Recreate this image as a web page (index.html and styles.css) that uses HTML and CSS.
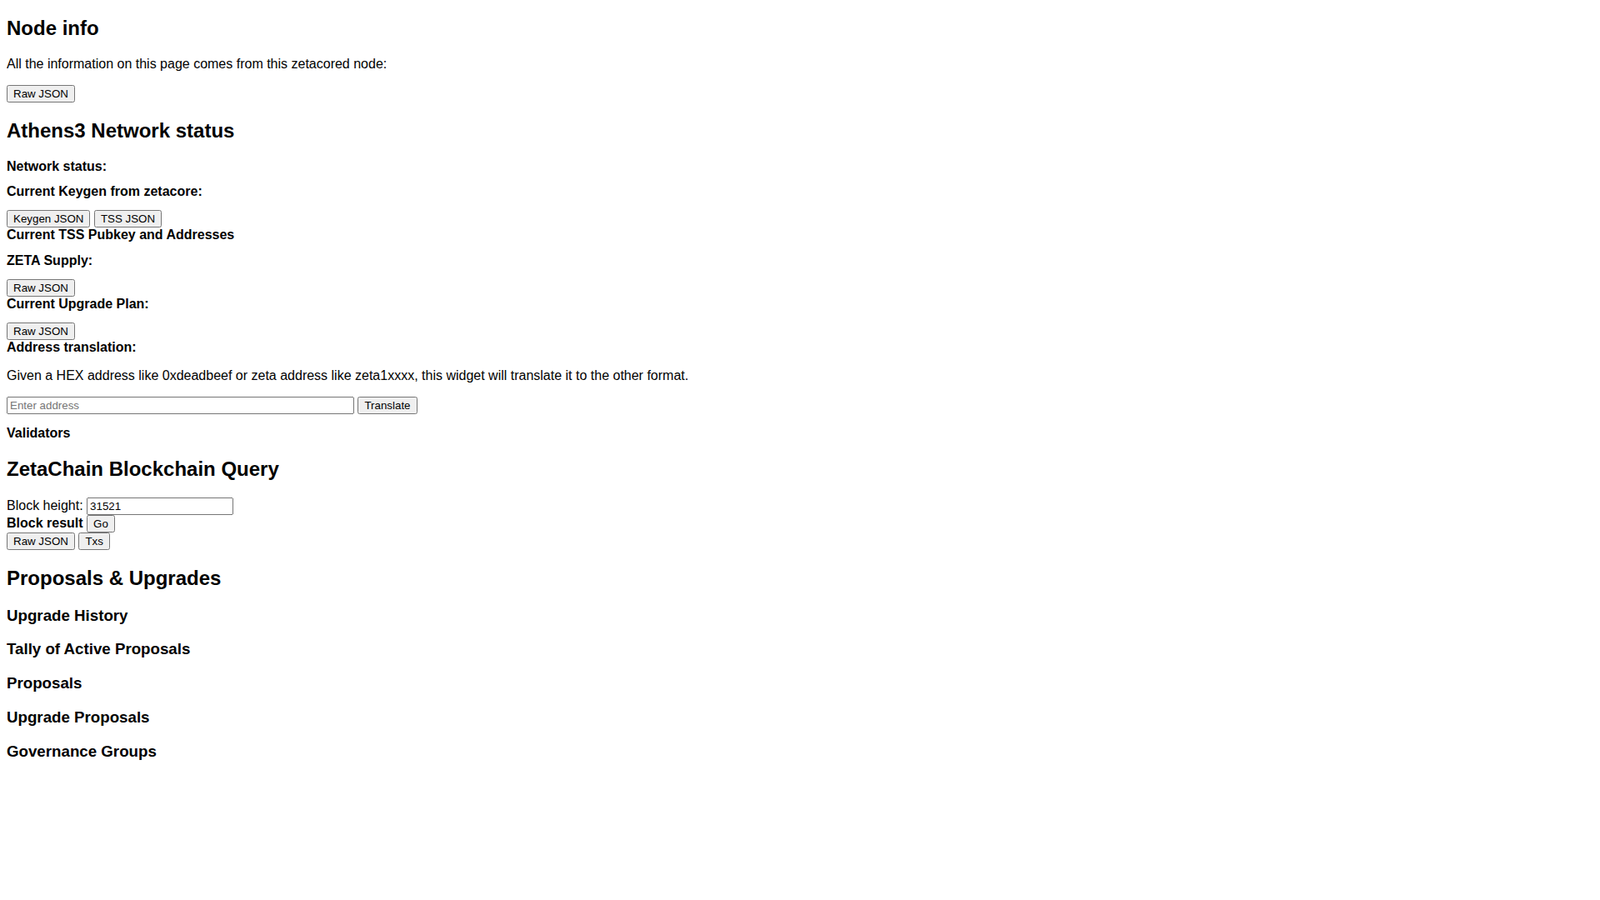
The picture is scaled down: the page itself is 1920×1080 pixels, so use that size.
FILE: index.html
```html
<!DOCTYPE html>
<html lang="en">
<head>
<meta charset="utf-8">
<title>Node info</title>
<link rel="stylesheet" href="styles.css">
</head>
<body class="page">
  <h2 class="section-title">Node info</h2>
  <p class="text">All the information on this page comes from this zetacored node:</p>
  <div class="btn-row"><button class="btn">Raw JSON</button></div>

  <h2 class="section-title">Athens3 Network status</h2>
  <h4 class="label">Network status:</h4>
  <h4 class="label">Current Keygen from zetacore:</h4>
  <div class="btn-row"><button class="btn">Keygen JSON</button> <button class="btn">TSS JSON</button></div>
  <h4 class="label">Current TSS Pubkey and Addresses</h4>
  <h4 class="label">ZETA Supply:</h4>
  <div class="btn-row"><button class="btn">Raw JSON</button></div>
  <h4 class="label">Current Upgrade Plan:</h4>
  <div class="btn-row"><button class="btn">Raw JSON</button></div>
  <h4 class="label">Address translation:</h4>
  <p class="text">Given a HEX address like 0xdeadbeef or zeta address like zeta1xxxx, this widget will translate it to the other format.</p>
  <div class="form-row"><input class="field field-wide" type="text" placeholder="Enter address"> <button class="btn">Translate</button></div>
  <h4 class="label">Validators</h4>

  <h2 class="section-title">ZetaChain Blockchain Query</h2>
  <div class="query">
    <div class="query-line">Block height: <input class="field field-height" type="text" value="31521"></div>
    <div class="query-line"><strong>Block result</strong> <button class="btn">Go</button></div>
    <div class="query-line"><button class="btn">Raw JSON</button> <button class="btn">Txs</button></div>
  </div>

  <h2 class="section-title">Proposals &amp; Upgrades</h2>
  <h3 class="sub-title">Upgrade History</h3>
  <h3 class="sub-title">Tally of Active Proposals</h3>
  <h3 class="sub-title">Proposals</h3>
  <h3 class="sub-title">Upgrade Proposals</h3>
  <h3 class="sub-title">Governance Groups</h3>
</body>
</html>
```

FILE: styles.css
```css
html {
  margin: 0;
  padding: 0;
}

.page {
  margin: 0 8px 8px;
  padding: 0;
  font-family: "Liberation Sans", Arial, sans-serif;
  font-size: 16px;
  color: #000;
  background: #fff;
}

.section-title {
  font-size: 24px;
  font-weight: bold;
  margin: 19.92px 0;
}

.sub-title {
  font-size: 18.72px;
  font-weight: bold;
  margin: 18.72px 0;
}

.label {
  font-size: 16px;
  font-weight: bold;
  margin: 0 0 12.8px;
}

.text {
  margin: 16px 0;
}

.btn-row {
  margin: 0;
}

.form-row {
  margin: 0 0 14.5px;
}

.btn {
  font-family: "Liberation Sans", Arial, sans-serif;
  font-size: 13.333px;
}

.field {
  font-family: "Liberation Sans", Arial, sans-serif;
  font-size: 13.333px;
}

.field-wide {
  width: 417px;
  box-sizing: border-box;
}

.field-height {
  width: 176px;
  box-sizing: border-box;
}

.query-line strong {
  font-weight: bold;
}
```
